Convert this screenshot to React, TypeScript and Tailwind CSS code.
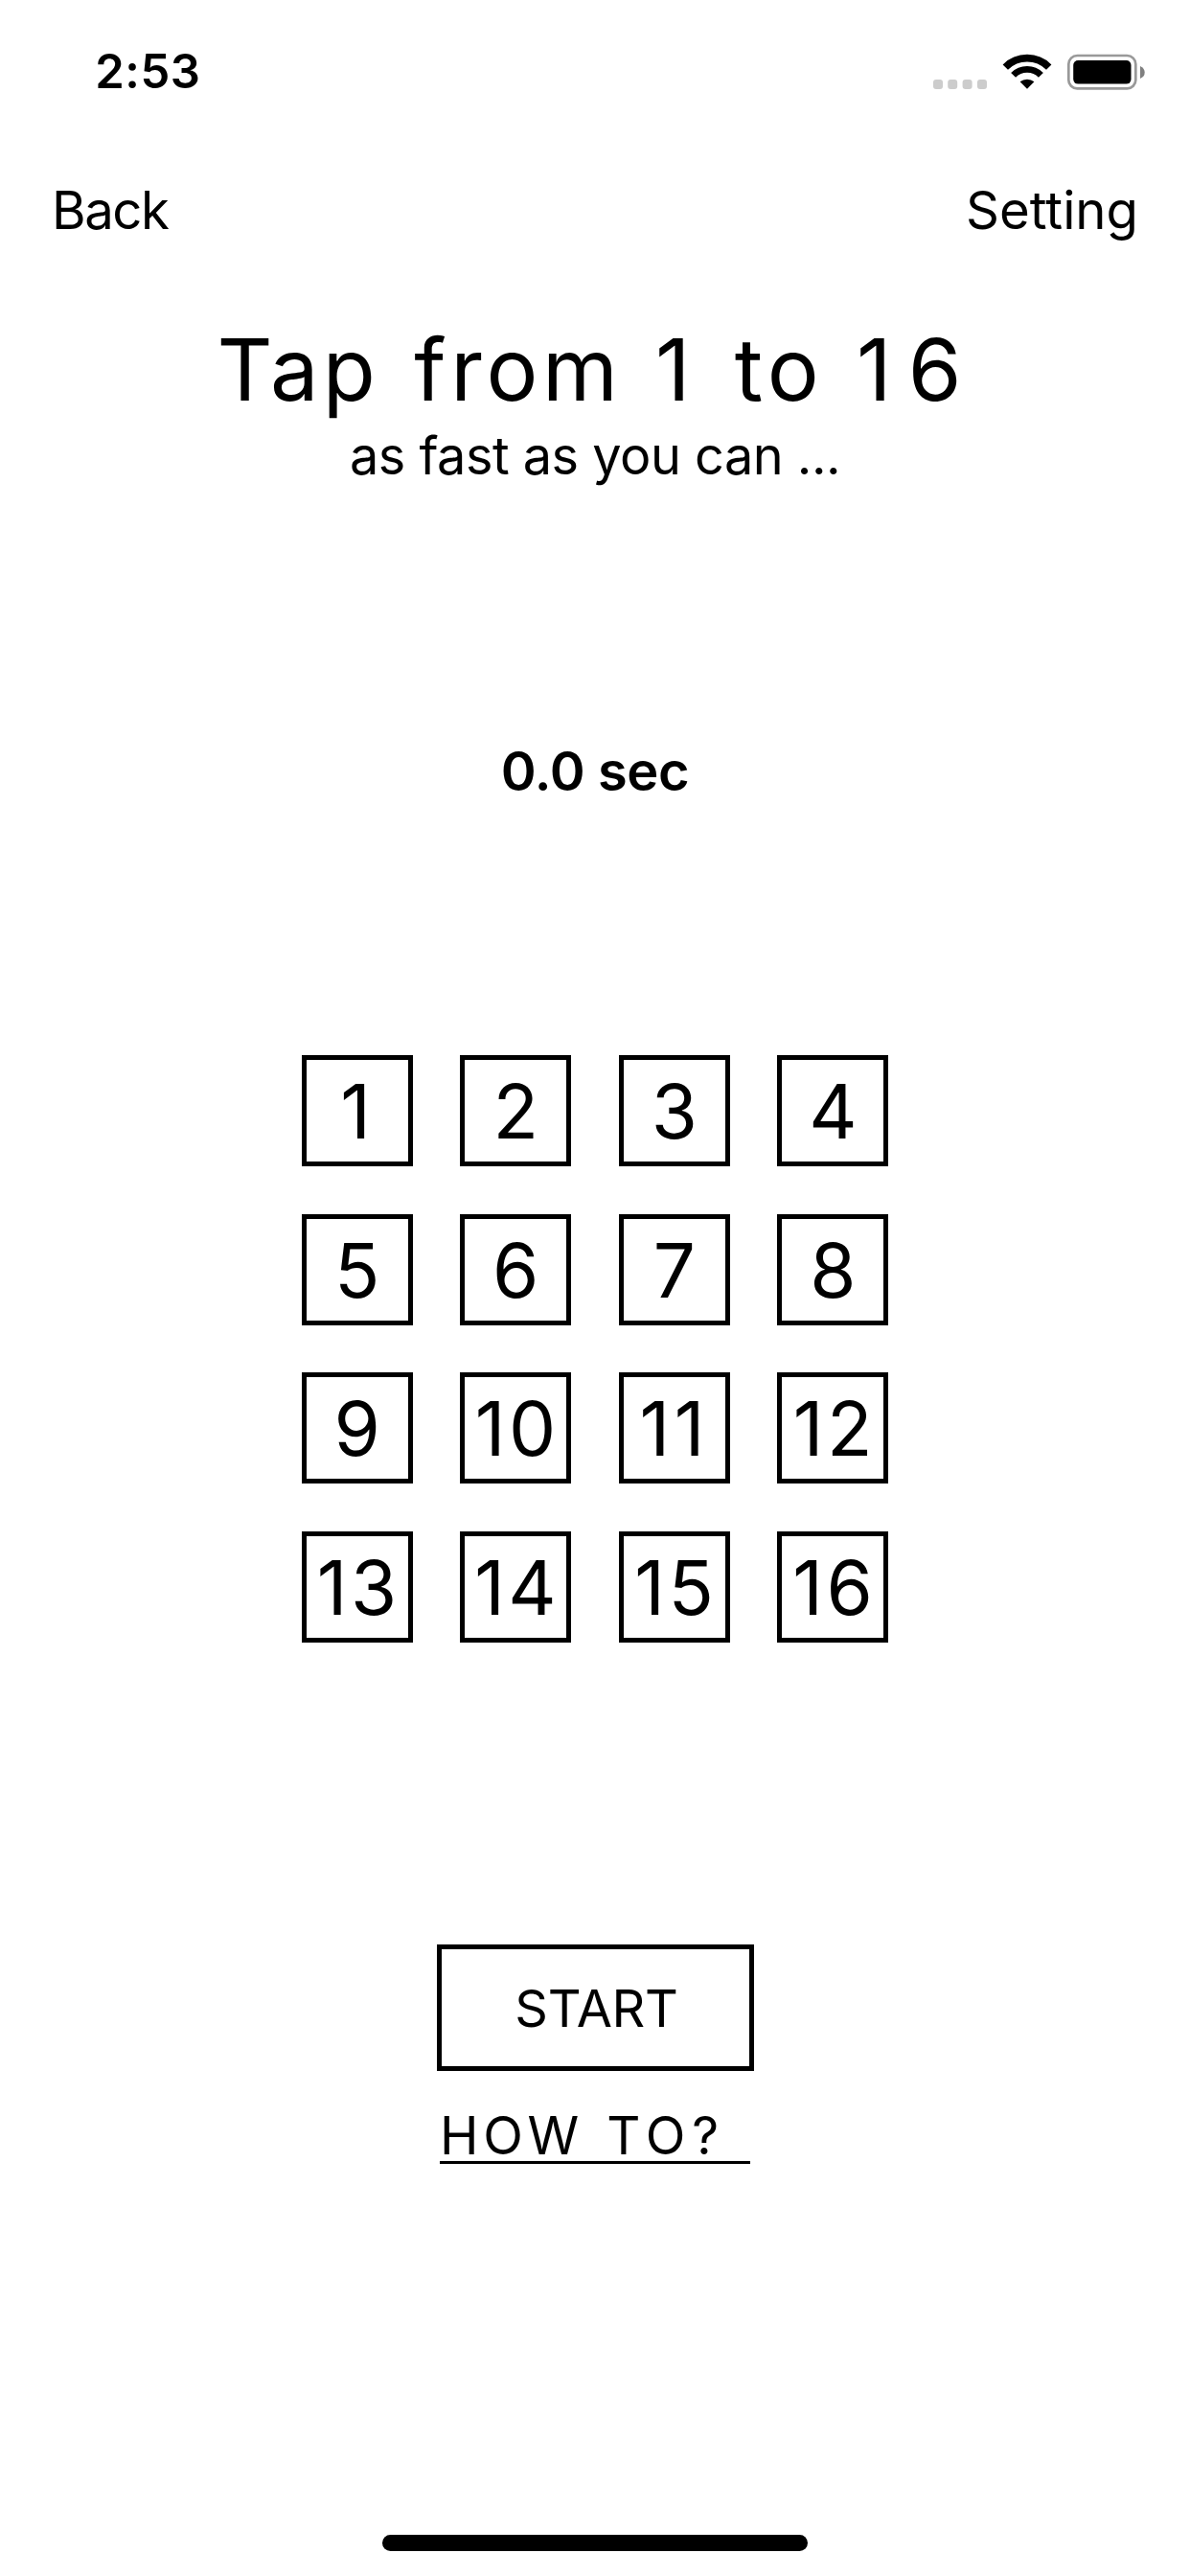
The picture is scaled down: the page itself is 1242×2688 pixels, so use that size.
const tiles = Array.from({ length: 16 }, (_, i) => i + 1);

function tileText(n: number) {
  if (n === 1) return "pr-[3px]";
  if (n === 11) return "tracking-[4.6px]";
  return n > 9 ? "tracking-[3.5px] pl-[3px]" : "";
}

function StatusIcons() {
  return (
    <svg className="mt-[52px]" width="222" height="48" viewBox="974 52 222 48">
      <g fill="#ccc">
        <rect x="974" y="83" width="10" height="10" rx="3" />
        <rect x="989.2" y="83" width="10" height="10" rx="3" />
        <rect x="1004.6" y="83" width="10" height="10" rx="3" />
        <rect x="1020" y="83" width="10" height="10" rx="3" />
      </g>
      <g fill="none" stroke="#000">
        <path d="M1049.3 70.1A32 32 0 0 1 1094.7 70.1" strokeWidth="7.6" />
        <path d="M1057.6 78.4A20.3 20.3 0 0 1 1086.4 78.4" strokeWidth="6.9" />
      </g>
      <path d="M1064.6 85.3A11.6 11.6 0 0 1 1079.4 85.3L1072 92.8Z" />
      <rect x="1115.3" y="58" width="70" height="34.4" rx="9" fill="none" stroke="#999" strokeWidth="2.7" />
      <rect x="1120.2" y="63" width="60.3" height="24.6" rx="5" />
      <path d="M1190 69Q1194.7 71 1194.7 75.5T1190 82Z" fill="#808080" />
    </svg>
  );
}

export default function App() {
  return (
    <main
      className="flex h-[2688px] w-[1242px] flex-col items-center bg-white text-black"
      style={{ fontFamily: 'Inter, "Liberation Sans", sans-serif' }}
    >
      <header className="flex h-[152px] w-full shrink-0 justify-between pl-[99.3px] pr-[46px]">
        <span className="mt-[43px] h-[64px] whitespace-nowrap text-[49px] font-semibold leading-[64px] tracking-[0.5px]">2:53</span>
        <StatusIcons />
      </header>
      <nav className="flex h-[134px] w-full shrink-0 justify-between px-[54px] text-[54.5px] leading-[134px]">
        <button className="tracking-[-1.45px]">Back</button>
        <button>Setting</button>
      </nav>
      <h1 className="mt-[44px] h-[112px] w-full whitespace-nowrap pl-[226.4px] text-[90px] leading-[112px]">
        <span className="mr-[10.9px] tracking-[4.2px]">Tap</span>{" "}
        <span className="mr-[9.1px] tracking-[4.7px]">from</span>{" "}
        <span className="mr-[20.7px]">1</span>{" "}
        <span className="mr-[8.6px] tracking-[5.5px]">to</span>{" "}
        <span className="tracking-[17px]">16</span>
      </h1>
      <p className="-mt-px h-[70px] text-[54px] leading-[70px] tracking-[-0.5px]">as fast as you can ...</p>
      <p className="mt-[259px] h-[70px] text-[56px] font-semibold leading-[70px] tracking-[-0.4px]">0.0 sec</p>
      <section className="mt-[261px] grid shrink-0 grid-cols-4 gap-[49.6px]">
        {tiles.map((n) => (
          <button key={n} className="flex size-[116px] items-center justify-center border-[5px] border-black pt-[2px] text-[78px] leading-none">
            <span className={tileText(n)}>{n}</span>
          </button>
        ))}
      </section>
      <button className="mt-[315px] h-[132px] w-[331px] shrink-0 border-[5px] border-black pl-[3px] pt-[2px] text-[54px] tracking-[-0.3px]">START</button>
      <a className="mt-[36px] h-[61px] w-[324px] shrink-0 whitespace-nowrap border-b-[3px] border-black text-[54.5px] leading-[62px]">
        <span className="mr-[9px] tracking-[4.7px]">HOW</span>{" "}
        <span className="tracking-[6.9px]">TO?</span>
      </a>
      <div className="mb-[26px] mt-auto h-[17px] w-[444px] rounded-full bg-black" />
    </main>
  );
}
